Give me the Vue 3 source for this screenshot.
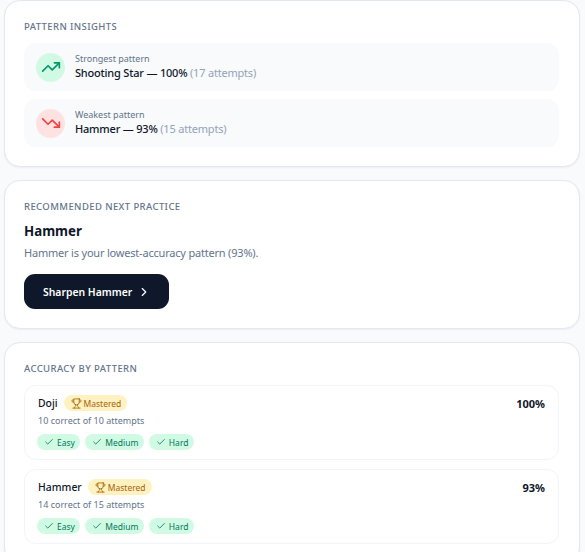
<script setup>
const insights = [
  { kind: 'up', label: 'Strongest pattern', main: 'Shooting Star — 100%', extra: '(17 attempts)' },
  { kind: 'down', label: 'Weakest pattern', main: 'Hammer — 93%', extra: '(15 attempts)' }
]
const patterns = [
  { name: 'Doji', pct: '100%', sub: '10 correct of 10 attempts' },
  { name: 'Hammer', pct: '93%', sub: '14 correct of 15 attempts' }
]
const levels = ['Easy', 'Medium', 'Hard']
</script>

<template>
  <div class="page">
    <section class="card">
      <h2 class="eyebrow">Pattern Insights</h2>
      <div class="insights">
        <div v-for="i in insights" :key="i.kind" class="insight">
          <span class="circle" :class="i.kind">
            <svg v-if="i.kind === 'up'" width="20" height="20" viewBox="0 0 24 24" fill="none" stroke="currentColor" stroke-width="2" stroke-linecap="round" stroke-linejoin="round"><path d="M22 7l-8.500 8.500-5-5L2 17" /><path d="M16 7h6v6" /></svg>
            <svg v-else width="20" height="20" viewBox="0 0 24 24" fill="none" stroke="currentColor" stroke-width="2" stroke-linecap="round" stroke-linejoin="round"><path d="M22 17l-8.500-8.500-5 5L2 7" /><path d="M16 17h6v-6" /></svg>
          </span>
          <div class="insight-text">
            <div class="label">{{ i.label }}</div>
            <div class="main">{{ i.main }} <span class="extra">{{ i.extra }}</span></div>
          </div>
        </div>
      </div>
    </section>

    <section class="card">
      <h2 class="eyebrow tight">Recommended Next Practice</h2>
      <div class="rec-title">Hammer</div>
      <p class="rec-desc">Hammer is your lowest-accuracy pattern (93%).</p>
      <button class="cta">
        Sharpen Hammer
        <svg width="14" height="14" viewBox="0 0 24 24" fill="none" stroke="currentColor" stroke-width="2" stroke-linecap="round" stroke-linejoin="round"><path d="M9 18l6-6-6-6" /></svg>
      </button>
    </section>

    <section class="card">
      <h2 class="eyebrow">Accuracy by Pattern</h2>
      <div class="patterns">
        <div v-for="p in patterns" :key="p.name" class="pattern">
          <div class="pattern-top">
            <div class="name-line">
              <span class="name">{{ p.name }}</span>
              <span class="mastered">
                <svg width="11" height="11" viewBox="0 0 24 24" fill="none" stroke="currentColor" stroke-width="1.800" stroke-linecap="round" stroke-linejoin="round"><path d="M6 9H4.500a2.500 2.500 0 0 1 0-5H6" /><path d="M18 9h1.500a2.500 2.500 0 0 0 0-5H18" /><path d="M4 22h16" /><path d="M10 14.700V17c0 .6-.5 1-1 1.200C7.800 18.800 7 20.300 7 22" /><path d="M14 14.700V17c0 .6.500 1 1 1.200 1.200.6 2 2.100 2 3.800" /><path d="M18 2H6v7a6 6 0 0 0 12 0V2z" /></svg>
                Mastered
              </span>
            </div>
            <span class="pct">{{ p.pct }}</span>
          </div>
          <div class="sub">{{ p.sub }}</div>
          <div class="chips">
            <span v-for="l in levels" :key="l" class="chip">
              <svg width="10" height="10" viewBox="0 0 24 24" fill="none" stroke="currentColor" stroke-width="2" stroke-linecap="round" stroke-linejoin="round"><path d="M20 6L9 17l-5-5" /></svg>
              {{ l }}
            </span>
          </div>
        </div>
      </div>
    </section>
  </div>
</template>

<style>
html, body { margin: 0; background: #f8fafc; overflow: hidden; }
</style>

<style scoped>
.page {
  box-sizing: border-box;
  height: 552px;
  overflow: hidden;
  padding: 0 5.500px 0 3.500px;
  display: flex;
  flex-direction: column;
  gap: 13px;
  background: #f8fafc;
  font-family: "Noto Sans", sans-serif;
  color: #0f172a;
}
.card {
  flex: none;
  background: #fff;
  border: 1px solid #e2e8f0;
  border-radius: 16px;
  padding: 20px 19.500px 19px;
  box-shadow: 0 1px 2px rgba(15, 23, 42, 0.05);
}
.eyebrow {
  margin: 0 0 10px;
  font-size: 9.500px;
  line-height: 12px;
  font-weight: 500;
  letter-spacing: 0.4px;
  text-transform: uppercase;
  color: #64748b;
}
.eyebrow.tight { margin-bottom: 9px; }
.insights { display: flex; flex-direction: column; gap: 8px; }
.insight {
  display: flex;
  align-items: center;
  gap: 10px;
  padding: 9.500px 12px;
  border-radius: 12px;
  background: #f8fafc;
}
.circle {
  flex: none;
  width: 29px;
  height: 29px;
  border-radius: 50%;
  display: flex;
  align-items: center;
  justify-content: center;
}
.circle.up { background: #d1fae5; color: #059669; }
.circle.down { background: #fee2e2; color: #ef4444; }
.label { font-size: 9px; line-height: 12px; color: #64748b; }
.main { font-size: 11px; line-height: 16px; font-weight: 500; letter-spacing: -0.2px; }
.extra { font-weight: 400; color: #94a3b8; }
.rec-title { font-size: 13.300px; line-height: 18px; font-weight: 700; margin-bottom: 5px; }
.rec-desc { margin: 0 0 13px; font-size: 11px; line-height: 16px; letter-spacing: -0.2px; color: #64748b; }
.cta {
  display: flex;
  align-items: center;
  gap: 5px;
  height: 35px;
  padding: 0 18px 0 19px;
  border: 0;
  border-radius: 11px;
  background: #0f172a;
  color: #fff;
  font-family: inherit;
  font-size: 10.400px;
  font-weight: 600;
}
.patterns { display: flex; flex-direction: column; gap: 9px; }
.pattern {
  border: 1px solid #f1f5f9;
  border-radius: 12px;
  padding: 9px 13px;
}
.pattern-top { display: flex; align-items: center; justify-content: space-between; }
.name-line { display: flex; align-items: center; gap: 6px; }
.name { font-size: 10.400px; font-weight: 500; }
.pct { font-size: 11px; font-weight: 700; }
.mastered {
  display: inline-flex;
  align-items: center;
  gap: 2px;
  height: 16px;
  padding: 0 6px 0 7px;
  border-radius: 8px;
  background: #fef3c0;
  color: #a8620c;
  font-size: 8.500px;
}
.sub { margin-top: 3px; font-size: 9px; line-height: 14px; color: #64748b; }
.chips { display: flex; gap: 5px; margin: 6px 0 0 -1px; }
.chip {
  display: inline-flex;
  align-items: center;
  gap: 3px;
  height: 16px;
  padding: 0 5.400px 0 7px;
  border-radius: 8px;
  background: #d1fae5;
  color: #047857;
  font-size: 8.500px;
}
</style>
